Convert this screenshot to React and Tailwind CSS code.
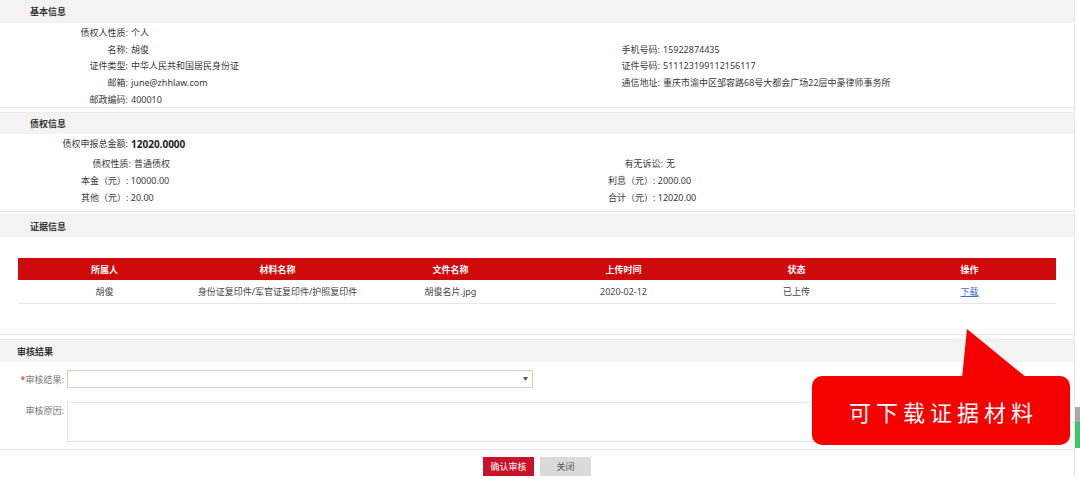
import React from "react";

function InfoRow({ left, right, h = "h-[16.75px]" }) {
  return (
    <div className={`flex items-center ${h}`}>
      <div className="flex w-[537px] items-center">{left}</div>
      <div className="flex items-center">{right}</div>
    </div>
  );
}

function LV({ w, label, value, bold }) {
  return (
    <>
      <span className={`${w} shrink-0 text-right whitespace-nowrap`}>{label}</span>
      <span className={`pl-[3px] whitespace-nowrap ${bold ? "font-bold text-[10px] text-[#222]" : ""}`}>{value}</span>
    </>
  );
}

function Header({ children, pl = "pl-[30px]", h = "h-[23px]" }) {
  return (
    <div className={`${h} ${pl} flex items-center bg-[#f3f3f3] border-t border-[#ececec] font-bold text-[#333]`}>
      {children}
    </div>
  );
}

export default function App() {
  const cols = ["所属人", "材料名称", "文件名称", "上传时间", "状态", "操作"];
  return (
    <div className="relative w-[1080px] h-[479px] overflow-hidden bg-white text-[9px] leading-none text-[#3a3a3a] font-['Noto_Sans','Noto_Sans_CJK_SC',sans-serif]">
      <div className="flex">
        <main className="w-[1075px] border-r border-[#e6e6e6]">
          {/* 基本信息 */}
          <div className="h-[23px] pl-[30px] flex items-center bg-[#f3f3f3] font-bold text-[#333]">基本信息</div>
          <div className="h-[85px] pt-[1px] border-b border-[#e6e6e6]">
            <InfoRow left={<LV w="w-[128px]" label="债权人性质:" value="个人" />} />
            <InfoRow
              left={<LV w="w-[128px]" label="名称:" value="胡俊" />}
              right={<LV w="w-[123px]" label="手机号码:" value="15922874435" />}
            />
            <InfoRow
              left={<LV w="w-[128px]" label="证件类型:" value="中华人民共和国居民身份证" />}
              right={<LV w="w-[123px]" label="证件号码:" value="511123199112156117" />}
            />
            <InfoRow
              left={<LV w="w-[128px]" label="邮箱:" value="june@zhhlaw.com" />}
              right={<LV w="w-[123px]" label="通信地址:" value="重庆市渝中区邹容路68号大都会广场22层中豪律师事务所" />}
            />
            <InfoRow left={<LV w="w-[128px]" label="邮政编码:" value="400010" />} />
          </div>

          {/* 债权信息 */}
          <div className="mt-[4px]">
            <Header h="h-[22px]">债权信息</Header>
            <div className="pt-[1px] pb-[5px] border-b border-[#e6e6e6]">
              <InfoRow h="h-[17px]" left={<LV w="w-[128px]" label="债权申报总金额:" value="12020.0000" bold />} />
              <div className="h-[3px]" />
              <InfoRow
                h="h-[17px]"
                left={<LV w="w-[131px]" label="债权性质:" value="普通债权" />}
                right={<LV w="w-[126px]" label="有无诉讼:" value="无" />}
              />
              <InfoRow
                h="h-[17px]"
                left={<span className="pl-[81px] whitespace-nowrap">本金（元）: 10000.00</span>}
                right={<span className="pl-[71px] whitespace-nowrap">利息（元）: 2000.00</span>}
              />
              <InfoRow
                h="h-[17px]"
                left={<span className="pl-[81px] whitespace-nowrap">其他（元）: 20.00</span>}
                right={<span className="pl-[71px] whitespace-nowrap">合计（元）: 12020.00</span>}
              />
            </div>
          </div>

          {/* 证据信息 */}
          <div className="mt-[2px]">
            <Header>证据信息</Header>
            <div className="h-[98px] pt-[21px] px-[18px] border-b border-[#e6e6e6]">
              <div className="grid grid-cols-6 h-[22px] items-center bg-[#cf0a0a] text-white font-bold text-center">
                {cols.map((c) => (
                  <span key={c}>{c}</span>
                ))}
              </div>
              <div className="grid grid-cols-6 h-[24px] items-center text-center border-b border-[#e8e8e8] text-[#444]">
                <span>胡俊</span>
                <span>身份证复印件/军官证复印件/护照复印件</span>
                <span>胡俊名片.jpg</span>
                <span>2020-02-12</span>
                <span>已上传</span>
                <span className="text-[#3b6fd4] underline">下载</span>
              </div>
            </div>
          </div>

          {/* 审核结果 */}
          <div className="mt-[4px]">
            <Header pl="pl-[17px]">审核结果</Header>
            <div className="pt-[8px] pb-[7px] border-b border-[#e6e6e6]">
              <div className="flex items-center h-[18px]">
                <span className="w-[64px] text-right text-[#777]">
                  <span className="text-[#e02020]">*</span>审核结果:
                </span>
                <div className="ml-[3px] w-[466px] h-[18px] border border-[#e2cfbd] flex items-center justify-end pr-[4px]">
                  <svg width="5" height="4" viewBox="0 0 5 4">
                    <path d="M0 0 L5 0 L2.5 4 Z" fill="#555" />
                  </svg>
                </div>
              </div>
              <div className="flex mt-[14px] h-[40px]">
                <span className="w-[64px] text-right text-[#777] pt-[4px]">审核原因:</span>
                <div className="ml-[3px] w-[1003px] h-[40px] border border-[#e4e4e4]" />
              </div>
            </div>
            <div className="flex justify-center gap-[6px] pt-[7px]">
              <button className="w-[51px] h-[19px] bg-[#c8142b] text-white text-[9px] flex items-center justify-center">确认审核</button>
              <button className="w-[51px] h-[19px] bg-[#dadada] text-[#555] text-[9px] flex items-center justify-center">关闭</button>
            </div>
          </div>
        </main>
        <div className="w-[5px] pt-[407px]">
          <div className="h-[15px] bg-[#a9a9a9]" />
          <div className="h-[26px] bg-[#3fc46a]" />
        </div>
      </div>

      {/* callout */}
      <div className="absolute left-[812px] top-[328px] w-[260px] h-[118px]">
        <svg className="absolute inset-0" width="260" height="118" viewBox="0 0 260 118">
          <path d="M155 1 L215 50 L150 50 Z" fill="#f60000" />
          <rect x="0" y="48" width="258" height="69" rx="10" fill="#f60000" />
        </svg>
        <div className="absolute left-0 top-[48px] w-[258px] h-[69px] flex items-center justify-center text-white text-[22px] tracking-[5px] font-['Noto_Sans_CJK_SC',sans-serif] pl-[5px]">
          可下载证据材料
        </div>
      </div>
    </div>
  );
}
